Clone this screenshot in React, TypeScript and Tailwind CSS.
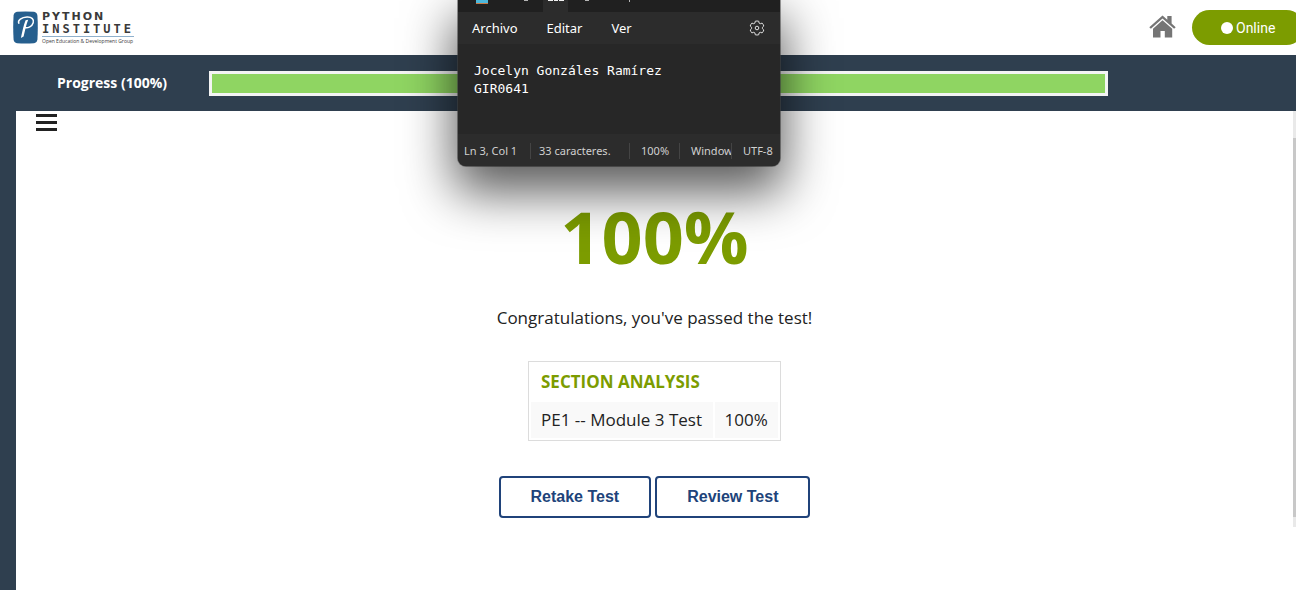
import React from "react";

const navy = "bg-[#2f3f4f]";

function Logo() {
  return (
    <a href="#home" className="flex items-center gap-1 no-underline" aria-label="Python Institute">
      <svg width="25" height="33" viewBox="0 0 25 33" aria-hidden="true">
        <path
          d="M4 .8Q12.500 0 21 .8Q24 1.200 24.400 4.500Q25.200 16.500 24.400 28.500Q24 31.800 21 32.200Q12.500 33 4 32.200Q1 31.800 .6 28.500Q-.2 16.500 .6 4.500Q1 1.200 4 .8Z"
          fill="#265f8e"
        />
        <path
          d="M5.800 12.200C4.500 9.300 8.500 6.300 14 6.100C19 5.900 21.200 8.400 20.200 11.800C19.200 15.300 15 17.600 11.500 16.600"
          fill="none"
          stroke="#fff"
          strokeWidth="1.500"
          strokeLinecap="round"
        />
        <path d="M12.600 9.200L15.200 8.800C13.200 13.500 12 20 10.600 25.600L7.900 27C9.300 20.500 10.500 14.500 12.600 9.200Z" fill="#fff" />
      </svg>
      <span className="flex flex-col text-[#3a3a3a]">
        <span className="font-['DejaVu_Sans',sans-serif] text-[11px] leading-3 font-bold tracking-[2px]">PYTHON</span>
        <span className="font-['DejaVu_Sans_Mono',monospace] text-xs leading-3 font-bold tracking-[3px]">INSTITUTE</span>
        <span className="mt-px border-t border-[#8fb0cc] font-['Open_Sans',sans-serif] text-[5px] leading-2 whitespace-nowrap">
          Open Education &amp; Development Group
        </span>
      </span>
    </a>
  );
}

function HomeIcon() {
  return (
    <svg width="27" height="23" viewBox="0 0 27 23" fill="#757575" aria-hidden="true">
      <path d="M13.500 .4L18.300 4.700V1H22.600V8.500L26.700 12.200L25.100 13.800L13.500 3.500L1.900 13.800L.3 12.200Z" />
      <path d="M13.500 5.200L23.200 13.800V22.500H15.800V16H11.500V22.500H4V13.800Z" />
    </svg>
  );
}

function GearIcon() {
  return (
    <svg width="16" height="16" viewBox="0 0 16 16" fill="none" stroke="#e0e0e0" strokeLinejoin="round" aria-hidden="true">
      <path d="M6.300 1.200Q8 .8 9.700 1.200L10.100 3.100L11.300 3.700L13.100 3.100Q14.300 4.300 14.800 6L13.400 7.300V8.700L14.800 10Q14.300 11.700 13.100 12.900L11.300 12.300L10.100 12.900L9.700 14.800Q8 15.200 6.300 14.800L5.900 12.900L4.700 12.300L2.900 12.900Q1.700 11.700 1.200 10L2.600 8.700V7.300L1.200 6Q1.700 4.300 2.900 3.100L4.700 3.700L5.900 3.100Z" />
      <circle cx="8" cy="8" r="1.800" />
    </svg>
  );
}

function Notepad() {
  return (
    <section
      aria-label="Bloc de notas"
      className="absolute top-0 left-[458px] flex w-[322px] flex-col overflow-hidden rounded-b-lg bg-[#272727] font-['Noto_Sans',sans-serif] text-white shadow-[0_22px_50px_4px_rgba(0,0,0,0.65),0_0_0_1px_rgba(100,100,100,0.6)]"
    >
      <div className="flex h-3 items-start bg-[#202020] pl-[18px]">
        <span className="h-1 w-3 border-b border-[#c77a45] bg-[#4db8dc]" />
        <span className="ml-9 h-px w-1 bg-[#b5b5b5]" />
        <span className="ml-[15px] flex h-3 w-[25px] justify-center gap-px bg-[#2c2c2c]">
          <span className="h-px w-[5px] bg-[#f0f0f0]" />
          <span className="h-px w-1 bg-[#f0f0f0]" />
          <span className="h-px w-[5px] bg-[#f0f0f0]" />
        </span>
        <span className="ml-[17px] h-px w-1 bg-[#b5b5b5]" />
        <span className="ml-10 h-[2px] w-px bg-[#b5b5b5]" />
      </div>
      <div className="flex h-8 items-center bg-[#2c2c2c] pr-[15px] pl-[14px] text-[13px]">
        <div className="flex flex-1 gap-[29px] pt-[2px]">
          <button type="button">Archivo</button>
          <button type="button">Editar</button>
          <button type="button">Ver</button>
        </div>
        <button type="button" aria-label="Configuración">
          <GearIcon />
        </button>
      </div>
      <p className="h-[90px] px-4 pt-[18px] font-['DejaVu_Sans_Mono',monospace] text-[13px] leading-[18px] whitespace-pre">
        {"Jocelyn Gonzáles Ramírez\nGIR0641"}
      </p>
      <div className="flex h-8 items-center bg-[#2c2c2c] pt-px pl-[6px] text-[11px] leading-4 whitespace-nowrap text-[#d0d0d0]">
        <span className="w-[66px]">Ln 3, Col 1</span>
        <span className="w-[99px] border-l border-[#444] pl-2">33 caracteres.</span>
        <span className="w-[50px] border-l border-[#444] pl-[11px]">100%</span>
        <span className="w-[53px] overflow-hidden border-x border-[#444] pl-[11px]">Window</span>
        <span className="pl-[11px]">UTF-8</span>
      </div>
    </section>
  );
}

export default function App() {
  return (
    <div className="relative flex min-h-screen flex-col overflow-hidden bg-white font-['Open_Sans',sans-serif] text-[#222]">
      <header className="flex h-[55px] items-center justify-between pl-[13px]">
        <Logo />
        <div className="-mr-2 flex items-center gap-4">
          <a href="#home" aria-label="Home" className="pb-[2px]">
            <HomeIcon />
          </a>
          <button
            type="button"
            className="flex h-[35px] w-28 items-center gap-[3px] rounded-full bg-[#7c9c00] pl-[29px] font-['Roboto',sans-serif] text-sm text-white"
          >
            <span className="size-3 rounded-full bg-white" />
            Online
          </button>
        </div>
      </header>

      <div className={`flex h-14 items-center pr-[188px] pl-[57px] ${navy}`}>
        <span className="w-38 text-sm font-bold text-white" id="progress-label">
          Progress (100%)
        </span>
        <div
          role="progressbar"
          aria-labelledby="progress-label"
          aria-valuenow={100}
          className="h-[25px] flex-1 border-3 border-[#f4f4f4] bg-[#8fd562]"
        />
      </div>

      <div className={`flex flex-1 pl-4 ${navy}`}>
        <main className="flex flex-1 flex-col bg-white">
          <button type="button" aria-label="Menu" className="mt-[3px] ml-5 flex w-[21px] flex-col gap-1">
            <span className="h-[3px] w-full bg-[#222]" />
            <span className="h-[3px] w-full bg-[#222]" />
            <span className="h-[3px] w-full bg-[#222]" />
          </button>
          <div className="flex flex-col items-center pt-[57px]">
            <h1 className="text-[72px] leading-[96px] font-bold text-[#7c9c00]">100%</h1>
            <p className="mt-[22px] text-[17px] leading-6">Congratulations, you've passed the test!</p>
            <table className="mt-[31px] w-[253px] border-separate border-spacing-[2px] border border-[#dcdcdc] text-left text-[17px] leading-6">
              <thead>
                <tr>
                  <th colSpan={2} className="h-9 px-[10px] font-bold text-[#7c9c00]">
                    SECTION ANALYSIS
                  </th>
                </tr>
              </thead>
              <tbody>
                <tr className="bg-[#f9f9f9] whitespace-nowrap">
                  <td className="h-9 px-[10px]">PE1 -- Module 3 Test</td>
                  <td className="h-9 px-[10px]">100%</td>
                </tr>
              </tbody>
            </table>
            <div className="mt-[35px] flex gap-1 font-['Liberation_Sans',sans-serif] text-base font-bold text-[#20437a]">
              <button type="button" className="h-[42px] rounded border-2 border-[#20437a] px-[30px]">
                Retake Test
              </button>
              <button type="button" className="h-[42px] rounded border-2 border-[#20437a] px-[30px]">
                Review Test
              </button>
            </div>
          </div>
        </main>
        <div className="w-[3px] bg-white" aria-hidden="true">
          <div className="h-[416px] bg-[#e9e9e9] pt-[27px]">
            <div className="h-[379px] bg-[#c8c8c8]" />
          </div>
        </div>
      </div>

      <Notepad />
    </div>
  );
}
